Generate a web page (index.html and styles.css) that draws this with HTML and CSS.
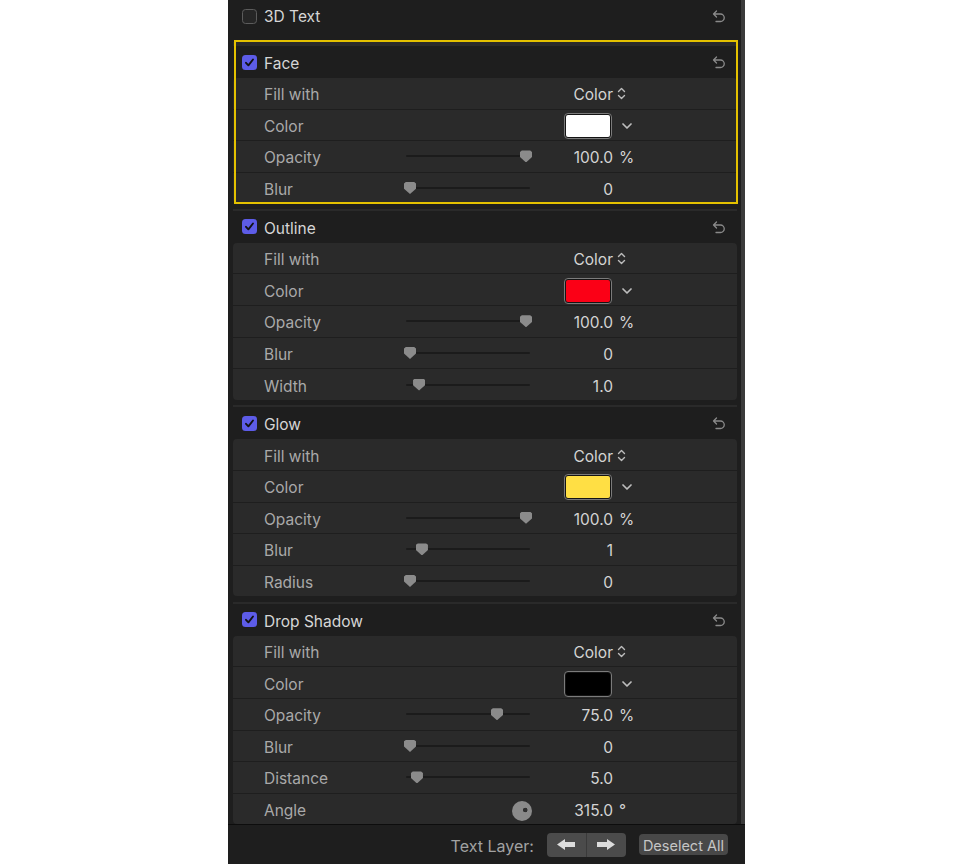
FILE: index.html
```html
<!DOCTYPE html>
<html>
<head>
<meta charset="utf-8">
<link rel="stylesheet" href="styles.css">
</head>
<body>
<div class="panel">
  <div class="scroll">
    <div class="content">
      <div class="toprow">
        <span class="check off"></span>
        <span class="title">3D Text</span>
        <svg class="reset" viewBox="0 0 14 14" width="14" height="14"><path d="M4.5 2 L1.5 5 L4.5 8 M1.5 5 H8.5 A3.75 3.75 0 0 1 8.5 12.5 H4"/></svg>
      </div>

      <section class="section selected">
        <div class="header">
          <span class="check on"><svg viewBox="0 0 15 15"><path d="M4 7.8 L6.4 10.3 L11 4.5"/></svg></span>
          <span class="title">Face</span>
          <svg class="reset" viewBox="0 0 14 14" width="14" height="14"><path d="M4.5 2 L1.5 5 L4.5 8 M1.5 5 H8.5 A3.75 3.75 0 0 1 8.5 12.5 H4"/></svg>
        </div>
        <div class="rows">
          <div class="row"><span class="label">Fill with</span><span></span><span class="value">Color</span><span class="popicon"><svg viewBox="0 0 9 13" width="9" height="13"><path d="M1.5 4.5 L4.5 1.5 L7.5 4.5 M1.5 8.5 L4.5 11.5 L7.5 8.5"/></svg></span></div>
          <div class="row"><span class="label">Color</span><span></span><span class="swatch"><span class="fill white"></span></span><span class="dropicon"><svg viewBox="0 0 10 6" width="10" height="6"><path d="M1 1 L5 5 L9 1"/></svg></span></div>
          <div class="row"><span class="label">Opacity</span><span class="slider" style="--v:1"><span class="thumb"></span></span><span class="value">100.0</span><span class="unit">%</span></div>
          <div class="row"><span class="label">Blur</span><span class="slider" style="--v:0"><span class="thumb"></span></span><span class="value">0</span><span></span></div>
        </div>
        <div class="focus"></div>
      </section>

      <section class="section">
        <div class="header">
          <span class="check on"><svg viewBox="0 0 15 15"><path d="M4 7.8 L6.4 10.3 L11 4.5"/></svg></span>
          <span class="title">Outline</span>
          <svg class="reset" viewBox="0 0 14 14" width="14" height="14"><path d="M4.5 2 L1.5 5 L4.5 8 M1.5 5 H8.5 A3.75 3.75 0 0 1 8.5 12.5 H4"/></svg>
        </div>
        <div class="rows">
          <div class="row"><span class="label">Fill with</span><span></span><span class="value">Color</span><span class="popicon"><svg viewBox="0 0 9 13" width="9" height="13"><path d="M1.5 4.5 L4.5 1.5 L7.5 4.5 M1.5 8.5 L4.5 11.5 L7.5 8.5"/></svg></span></div>
          <div class="row"><span class="label">Color</span><span></span><span class="swatch"><span class="fill red"></span></span><span class="dropicon"><svg viewBox="0 0 10 6" width="10" height="6"><path d="M1 1 L5 5 L9 1"/></svg></span></div>
          <div class="row"><span class="label">Opacity</span><span class="slider" style="--v:1"><span class="thumb"></span></span><span class="value">100.0</span><span class="unit">%</span></div>
          <div class="row"><span class="label">Blur</span><span class="slider" style="--v:0"><span class="thumb"></span></span><span class="value">0</span><span></span></div>
          <div class="row"><span class="label">Width</span><span class="slider" style="--v:0.078"><span class="thumb"></span></span><span class="value">1.0</span><span></span></div>
        </div>
      </section>

      <section class="section">
        <div class="header">
          <span class="check on"><svg viewBox="0 0 15 15"><path d="M4 7.8 L6.4 10.3 L11 4.5"/></svg></span>
          <span class="title">Glow</span>
          <svg class="reset" viewBox="0 0 14 14" width="14" height="14"><path d="M4.5 2 L1.5 5 L4.5 8 M1.5 5 H8.5 A3.75 3.75 0 0 1 8.5 12.5 H4"/></svg>
        </div>
        <div class="rows">
          <div class="row"><span class="label">Fill with</span><span></span><span class="value">Color</span><span class="popicon"><svg viewBox="0 0 9 13" width="9" height="13"><path d="M1.5 4.5 L4.5 1.5 L7.5 4.5 M1.5 8.5 L4.5 11.5 L7.5 8.5"/></svg></span></div>
          <div class="row"><span class="label">Color</span><span></span><span class="swatch"><span class="fill yellow"></span></span><span class="dropicon"><svg viewBox="0 0 10 6" width="10" height="6"><path d="M1 1 L5 5 L9 1"/></svg></span></div>
          <div class="row"><span class="label">Opacity</span><span class="slider" style="--v:1"><span class="thumb"></span></span><span class="value">100.0</span><span class="unit">%</span></div>
          <div class="row"><span class="label">Blur</span><span class="slider" style="--v:0.103"><span class="thumb"></span></span><span class="value">1</span><span></span></div>
          <div class="row"><span class="label">Radius</span><span class="slider" style="--v:0"><span class="thumb"></span></span><span class="value">0</span><span></span></div>
        </div>
      </section>

      <section class="section">
        <div class="header">
          <span class="check on"><svg viewBox="0 0 15 15"><path d="M4 7.8 L6.4 10.3 L11 4.5"/></svg></span>
          <span class="title">Drop Shadow</span>
          <svg class="reset" viewBox="0 0 14 14" width="14" height="14"><path d="M4.5 2 L1.5 5 L4.5 8 M1.5 5 H8.5 A3.75 3.75 0 0 1 8.5 12.5 H4"/></svg>
        </div>
        <div class="rows">
          <div class="row"><span class="label">Fill with</span><span></span><span class="value">Color</span><span class="popicon"><svg viewBox="0 0 9 13" width="9" height="13"><path d="M1.5 4.5 L4.5 1.5 L7.5 4.5 M1.5 8.5 L4.5 11.5 L7.5 8.5"/></svg></span></div>
          <div class="row"><span class="label">Color</span><span></span><span class="swatch"><span class="fill black"></span></span><span class="dropicon"><svg viewBox="0 0 10 6" width="10" height="6"><path d="M1 1 L5 5 L9 1"/></svg></span></div>
          <div class="row"><span class="label">Opacity</span><span class="slider" style="--v:0.75"><span class="thumb"></span></span><span class="value">75.0</span><span class="unit">%</span></div>
          <div class="row"><span class="label">Blur</span><span class="slider" style="--v:0"><span class="thumb"></span></span><span class="value">0</span><span></span></div>
          <div class="row"><span class="label">Distance</span><span class="slider" style="--v:0.06"><span class="thumb"></span></span><span class="value">5.0</span><span></span></div>
          <div class="row"><span class="label">Angle</span><span class="dial"></span><span class="value">315.0</span><span class="unit">°</span></div>
        </div>
      </section>
    </div>
    <div class="scrollbar"></div>
  </div>
  <div class="bottombar">
    <span class="tl-label">Text Layer:</span>
    <div class="arrows">
      <span class="arrow-btn"><svg viewBox="0 0 18 11" width="18" height="11"><path d="M0 5.5 L8 0 V3 H18 V8 H8 V11 Z"/></svg></span>
      <span class="arrow-btn divided"><svg viewBox="0 0 18 11" width="18" height="11"><path d="M18 5.5 L10 0 V3 H0 V8 H10 V11 Z"/></svg></span>
    </div>
    <span class="deselect">Deselect All</span>
  </div>
</div>
</body>
</html>
```

FILE: styles.css
```css
html, body {
  margin: 0;
  background: #ffffff;
}

body {
  font-family: Inter, "Noto Sans", sans-serif;
  font-size: 15.5px;
}

.panel {
  margin-left: 228px;
  width: 517px;
  height: 864px;
  background: #1e1e1e;
  display: flex;
  flex-direction: column;
}

.scroll {
  height: 824px;
  display: flex;
  overflow: hidden;
}

.content {
  width: 513px;
  box-sizing: border-box;
  padding: 0 4px 0 5px;
}

.scrollbar {
  width: 4px;
  background: #3b3b3b;
}

.toprow,
.header {
  display: flex;
  align-items: center;
  padding: 0 11px 0 9px;
}

.toprow {
  height: 32px;
  margin-bottom: 10px;
}

.header {
  height: 32px;
}

.title {
  flex: 1;
  margin-left: 7px;
  padding-top: 3px;
  color: #d6d6d6;
}

.toprow .title {
  padding-top: 1px;
}

.check {
  width: 15px;
  height: 15px;
  box-sizing: border-box;
  border-radius: 3.5px;
  display: flex;
}

.check.off {
  border: 1px solid #5c5c5c;
  background: #262626;
}

.check.on {
  background: #5d5ce8;
}

.check svg {
  width: 15px;
  height: 15px;
  fill: none;
  stroke: #121212;
  stroke-width: 1.9;
  stroke-linecap: round;
  stroke-linejoin: round;
}

.reset {
  fill: none;
  stroke: #8a8a8a;
  stroke-width: 1.3;
  stroke-linecap: round;
  stroke-linejoin: round;
}

.section {
  position: relative;
  border-top: 2px solid #2a2a2a;
  padding-bottom: 5.5px;
}

.section.selected {
  border-top-width: 4px;
}

.focus {
  position: absolute;
  left: 0.5px;
  right: -1px;
  top: -6.5px;
  bottom: 5px;
  border: 2px solid #e4c100;
  pointer-events: none;
}

.rows {
  display: flex;
  flex-direction: column;
  gap: 1px;
  border-radius: 4px;
  overflow: hidden;
}

.row {
  height: 30.6px;
  background: #2a2a2a;
  display: grid;
  grid-template-columns: 140px 128px 81px 1fr;
  align-items: center;
  padding-left: 31px;
}

.label,
.value,
.unit {
  padding-top: 3px;
}

.label {
  color: #a9a9a9;
}

.value {
  justify-self: end;
  color: #d4d4d4;
}

.unit {
  padding-left: 6px;
  color: #d4d4d4;
}

.popicon {
  display: flex;
  padding-left: 4px;
  padding-top: 1px;
}

.popicon svg,
.dropicon svg {
  fill: none;
  stroke: #bdbdbd;
  stroke-width: 1.4;
  stroke-linecap: round;
  stroke-linejoin: round;
}

.dropicon {
  display: flex;
  padding-left: 9px;
  padding-top: 2px;
}

.dropicon svg {
  stroke-width: 1.7;
}

.swatch {
  justify-self: end;
  margin-right: 1px;
  margin-top: 2px;
  width: 48px;
  height: 26px;
  box-sizing: border-box;
  border: 1.5px solid #7b7b7b;
  border-radius: 4px;
  padding: 1px;
  background: #141414;
  display: flex;
}

.fill {
  flex: 1;
  border-radius: 2px;
}

.fill.white { background: #ffffff; }
.fill.red { background: #fb0016; }
.fill.yellow { background: #ffdf44; }
.fill.black { background: #000000; }

.slider {
  position: relative;
  height: 12px;
  display: flex;
  align-items: center;
}

.slider::before {
  content: "";
  flex: 1;
  height: 2px;
  margin: 0 2px;
  background: #1b1b1b;
  border-radius: 1px;
}

.thumb {
  position: absolute;
  top: 0;
  left: calc(var(--v) * (100% - 12px));
  width: 12px;
  height: 12px;
  background: #8b8b8b;
  clip-path: polygon(15% 0, 85% 0, 100% 12%, 100% 55%, 50% 100%, 0 55%, 0 12%);
}

.dial {
  justify-self: end;
  margin-top: 3px;
  width: 20px;
  height: 20px;
  border-radius: 50%;
  background: radial-gradient(circle at 66% 45%, #303030 2px, #8a8a8a 2.6px);
}

.bottombar {
  height: 40px;
  box-sizing: border-box;
  border-top: 1px solid #0d0d0d;
  display: flex;
  align-items: center;
  justify-content: flex-end;
  padding-right: 17px;
  gap: 13px;
}

.tl-label {
  color: #a2a2a2;
  font-size: 16px;
  padding-top: 2px;
}

.arrows {
  display: flex;
  width: 79px;
  height: 24px;
  border-radius: 4px;
  background: #4b4b4b;
  overflow: hidden;
}

.arrow-btn {
  flex: 1;
  display: flex;
  align-items: center;
  justify-content: center;
}

.arrow-btn.divided {
  border-left: 1px solid #3a3a3a;
}

.arrow-btn svg {
  fill: #dcdcdc;
}

.deselect {
  height: 20px;
  display: flex;
  align-items: center;
  padding: 1px 4px 0;
  border-radius: 4px;
  background: #484848;
  color: #c6c6c6;
  font-size: 14.5px;
}
```
